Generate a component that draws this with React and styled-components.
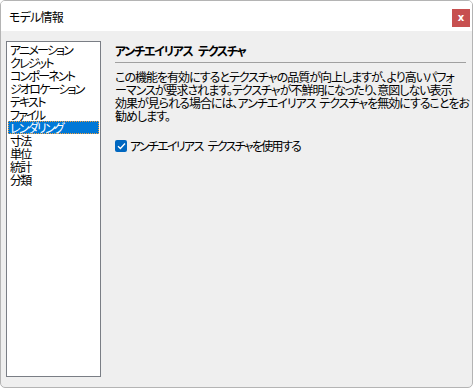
import React from "react";
import styled, { createGlobalStyle } from "styled-components";

const Global = createGlobalStyle`
  html, body { margin: 0; padding: 0; background: #ffffff; }
  body { font-family: "Noto Sans CJK JP", "Noto Sans", sans-serif; }
`;

const Window = styled.div`
  box-sizing: border-box;
  width: 473px;
  height: 388px;
  border: 1px solid #b4b4b4;
  border-radius: 5px;
  overflow: hidden;
  display: flex;
  flex-direction: column;
  background: #efefef;
  font-family: "Noto Sans CJK JP", "Noto Sans", sans-serif;
  font-feature-settings: "palt";
  color: #000;
`;

const TitleBar = styled.div`
  height: 30px;
  flex: none;
  background: #ffffff;
  display: flex;
  align-items: center;
  justify-content: space-between;
  padding: 0 2px 0 8px;
`;

const Title = styled.div`
  font-size: 12px;
  line-height: 14px;
  padding-top: 1px;
  letter-spacing: -0.8px;
`;

const CloseButton = styled.button`
  width: 18px;
  height: 18px;
  border: none;
  padding: 0;
  margin-top: 4px;
  background: #c75050;
  color: #fff;
  font: bold 10px "DejaVu Sans", sans-serif;
  line-height: 18px;
  text-align: center;
`;

const Body = styled.div`
  flex: 1;
  display: flex;
  padding: 10px 6px 10px 5px;
  gap: 14px;
`;

const List = styled.ul`
  box-sizing: border-box;
  width: 95px;
  height: 336px;
  flex: none;
  margin: 0;
  padding: 1px 1px;
  list-style: none;
  background: #fff;
  border: 1px solid #7a7e85;
`;

const Item = styled.li`
  height: 13px;
  line-height: 13px;
  font-size: 12px;
  letter-spacing: -1.8px;
  padding-left: 2px;
  white-space: nowrap;
  box-sizing: border-box;
  color: ${(p) => (p.$selected ? "#fff" : "#000")};
  background: ${(p) => (p.$selected ? "#0078d7" : "transparent")};
  outline: ${(p) => (p.$selected ? "1px dotted #f0a040" : "none")};
  outline-offset: -1px;
`;

const Panel = styled.div`
  flex: 1;
  min-width: 0;
  display: flex;
  flex-direction: column;
  padding-top: 2px;
`;

const Heading = styled.div`
  font-size: 12px;
  font-weight: bold;
  line-height: 16px;
  letter-spacing: -1.3px;
  word-spacing: 4px;
  padding-bottom: 3px;
  border-bottom: 1px solid #a0a0a0;
`;

const Paragraph = styled.p`
  margin: 7px 0 0 0;
  font-size: 12px;
  line-height: 13px;
  letter-spacing: -1px;
  word-spacing: 2px;
`;

const Line = styled.span`
  display: block;
  white-space: nowrap;
`;

const CheckRow = styled.label`
  display: flex;
  align-items: center;
  gap: 3px;
  margin-top: 17px;
  font-size: 12px;
  line-height: 14px;
  letter-spacing: -1.7px;
  word-spacing: 4px;
`;

const Box = styled.span`
  width: 12px;
  height: 12px;
  flex: none;
  border-radius: 2px;
  background: #0067c0;
  display: inline-flex;
  align-items: center;
  justify-content: center;
`;

const items = [
  "アニメーション",
  "クレジット",
  "コンポーネント",
  "ジオロケーション",
  "テキスト",
  "ファイル",
  "レンダリング",
  "寸法",
  "単位",
  "統計",
  "分類",
];

const lines = [
  "この機能を有効にするとテクスチャの品質が向上しますが、より高いパフォ",
  "ーマンスが要求されます。テクスチャが不鮮明になったり、意図しない表示",
  "効果が見られる場合には、アンチエイリアス テクスチャを無効にすることをお",
  "勧めします。",
];

export default function App() {
  return (
    <>
      <Global />
      <Window>
        <TitleBar>
          <Title>モデル情報</Title>
          <CloseButton>x</CloseButton>
        </TitleBar>
        <Body>
          <List>
            {items.map((t) => (
              <Item key={t} $selected={t === "レンダリング"}>
                {t}
              </Item>
            ))}
          </List>
          <Panel>
            <Heading>アンチエイリアス テクスチャ</Heading>
            <Paragraph>
              {lines.map((l) => (
                <Line key={l}>{l}</Line>
              ))}
            </Paragraph>
            <CheckRow>
              <Box>
                <svg width="9" height="8" viewBox="0 0 9 8">
                  <path d="M1 4.2 L3.4 6.5 L8 1.5" fill="none" stroke="#fff" strokeWidth="1.3" />
                </svg>
              </Box>
              アンチエイリアス テクスチャを使用する
            </CheckRow>
          </Panel>
        </Body>
      </Window>
    </>
  );
}
